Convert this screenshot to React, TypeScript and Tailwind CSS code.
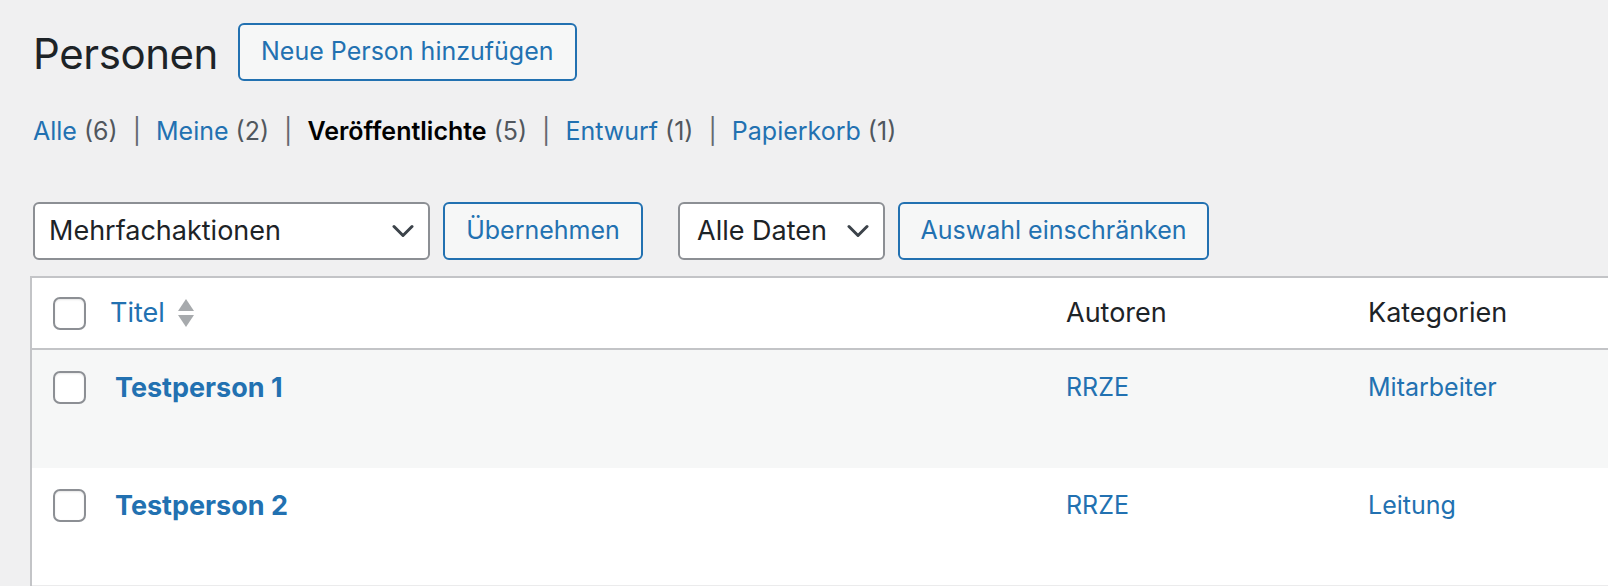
import React from "react";

const font = { fontFamily: "Inter, 'Noto Sans', sans-serif" };

function Checkbox() {
  return (
    <span className="block h-[33px] w-[33px] rounded-[7px] border-2 border-[#8c8f94] bg-white shadow-[inset_0_1px_2px_rgba(0,0,0,0.1)]" />
  );
}

function Chevron() {
  return (
    <svg width="22" height="14" viewBox="0 0 22 14" fill="none">
      <path d="M2 2.5l9 9 9-9" stroke="#3c434a" strokeWidth="3" strokeLinecap="round" strokeLinejoin="round" />
    </svg>
  );
}

function SortArrows() {
  return (
    <svg width="18" height="30" viewBox="0 0 18 30" className="ml-[12px]">
      <path d="M9 1l8 12H1z" fill="#a7aaad" />
      <path d="M9 29L1 17h16z" fill="#a7aaad" />
    </svg>
  );
}

const views = [
  { label: "Alle", count: 6 },
  { label: "Meine", count: 2 },
  { label: "Veröffentlichte", count: 5, current: true },
  { label: "Entwurf", count: 1 },
  { label: "Papierkorb", count: 1 },
];

const rows = [
  { title: "Testperson 1", author: "RRZE", cat: "Mitarbeiter" },
  { title: "Testperson 2", author: "RRZE", cat: "Leitung" },
];

export default function App() {
  return (
    <div className="h-[586px] w-[1608px] overflow-hidden bg-[#f0f0f1] text-[#1d2327]" style={font}>
      <div className="pl-[33px]">
        {/* heading */}
        <div className="flex h-[104px] items-center">
          <h1 className="pt-[3px] text-[42px] font-normal leading-none tracking-[-0.01em]">Personen</h1>
          <button className="ml-[20px] h-[58px] rounded-[6px] border-2 border-[#2271b1] bg-[#f6f7f7] px-[21px] text-[25px] text-[#2271b1]">
            Neue Person hinzufügen
          </button>
        </div>

        {/* views */}
        <ul className="flex h-[52px] items-center pt-[4px] text-[25px] text-[#646970]">
          {views.map((v, i) => (
            <li key={v.label} className="flex items-center">
              <span className={v.current ? "font-semibold text-black" : "text-[#2271b1]"}>{v.label}</span>
              <span className="ml-[7px] text-[#50575e]">({v.count})</span>
              {i < views.length - 1 && <span className="mx-[15px] text-[#646970]">|</span>}
            </li>
          ))}
        </ul>

        {/* tablenav */}
        <div className="mt-[46px] flex h-[58px] items-center">
          <div className="flex h-[58px] w-[397px] items-center justify-between rounded-[6px] border-2 border-[#8c8f94] bg-white pl-[14px] pr-[14px] text-[27px]">
            <span>Mehrfachaktionen</span>
            <Chevron />
          </div>
          <button className="ml-[13px] h-[58px] w-[200px] rounded-[6px] border-2 border-[#2271b1] bg-[#f6f7f7] text-[25px] text-[#2271b1]">
            Übernehmen
          </button>
          <div className="ml-[35px] flex h-[58px] w-[207px] items-center justify-between rounded-[6px] border-2 border-[#8c8f94] bg-white pl-[17px] pr-[14px] text-[27px]">
            <span>Alle Daten</span>
            <Chevron />
          </div>
          <button className="ml-[13px] h-[58px] w-[311px] rounded-[6px] border-2 border-[#2271b1] bg-[#f6f7f7] text-[25px] text-[#2271b1]">
            Auswahl einschränken
          </button>
        </div>
      </div>

      {/* table */}
      <div className="ml-[30px] mt-[16px] border-l-2 border-t-2 border-[#c3c4c7] bg-white">
        <div className="flex h-[72px] items-center border-b-2 border-[#c3c4c7] text-[27px]">
          <div className="w-[78px] pl-[21px]">
            <Checkbox />
          </div>
          <div className="flex w-[956px] items-center text-[#2271b1]">
            Titel
            <SortArrows />
          </div>
          <div className="w-[302px]">Autoren</div>
          <div>Kategorien</div>
        </div>
        {rows.map((r, i) => (
          <div
            key={r.title}
            className={`flex items-start pt-[21px] ${
              i % 2 === 0 ? "h-[118px] bg-[#f6f7f7]" : "h-[118px] border-b border-[#ebebec] bg-white"
            }`}
          >
            <div className="w-[83px] pl-[21px]">
              <Checkbox />
            </div>
            <div className="w-[951px] text-[27px] font-bold leading-[34px] text-[#2271b1]">{r.title}</div>
            <div className="w-[302px] text-[25px] leading-[32px] text-[#2271b1]">{r.author}</div>
            <div className="text-[25px] leading-[32px] text-[#2271b1]">{r.cat}</div>
          </div>
        ))}
      </div>
    </div>
  );
}
